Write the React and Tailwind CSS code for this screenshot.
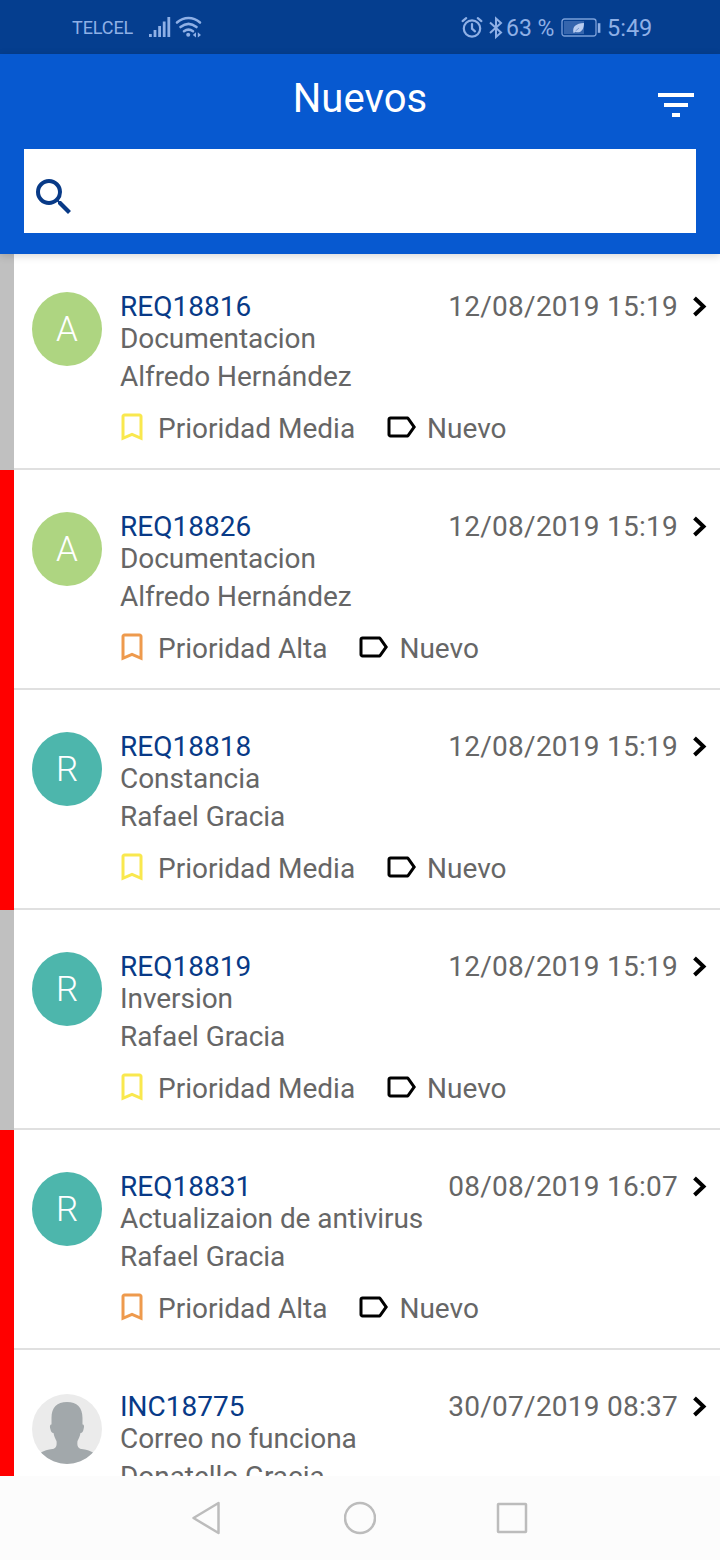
import React from 'react';
import { MdBookmarkBorder, MdFilterList, MdLabelOutline, MdSearch } from 'react-icons/md';

const tickets = [
  { id: 'REQ18816', title: 'Documentacion', owner: 'Alfredo Hernández', date: '12/08/2019 15:19', priority: 'Media', late: false },
  { id: 'REQ18826', title: 'Documentacion', owner: 'Alfredo Hernández', date: '12/08/2019 15:19', priority: 'Alta', late: true },
  { id: 'REQ18818', title: 'Constancia', owner: 'Rafael Gracia', date: '12/08/2019 15:19', priority: 'Media', late: true },
  { id: 'REQ18819', title: 'Inversion', owner: 'Rafael Gracia', date: '12/08/2019 15:19', priority: 'Media', late: false },
  { id: 'REQ18831', title: 'Actualizaion de antivirus', owner: 'Rafael Gracia', date: '08/08/2019 16:07', priority: 'Alta', late: true },
  { id: 'INC18775', title: 'Correo no funciona', owner: 'Donatello Gracia', date: '30/07/2019 08:37', late: true, photo: true },
];

const avatarColors = { A: 'bg-[#aed581]', R: 'bg-[#4db6ac]' };
const priorityColors = { Media: 'text-[#f9e84e]', Alta: 'text-[#ee9a4d]' };

const StatusBar = () => (
  <div className="h-[54px] shrink-0 bg-[#053e8f] text-[#8fb0e6] flex items-center pl-[72px] pr-[68px] pt-0.5">
    <span className="text-[18px] tracking-[-0.1px] w-[76px] -mt-0.5">TELCEL</span>
    <svg className="w-[24px] h-[24px]" viewBox="0 0 24 24" fill="currentColor">
      <rect x="1" y="18" width="2.8" height="3" />
      <rect x="5.6" y="14" width="2.8" height="7" />
      <rect x="10.2" y="10" width="2.8" height="11" />
      <rect x="14.8" y="5.5" width="2.8" height="15.5" />
      <rect x="19.4" y="1" width="2.8" height="20" />
    </svg>
    <svg className="w-[28px] h-[24px] ml-[3px]" viewBox="0 0 28 24" fill="none" stroke="currentColor" strokeWidth="2.6" strokeLinecap="round">
      <path d="M2 6.5C9 0.5 18 0.5 25 6.5" />
      <path d="M5.5 11C10.5 7 16.5 7 21.5 11" />
      <path d="M9 15.2C12 13 15 13 18 15.2" />
      <circle cx="13.2" cy="18.8" r="2" fill="currentColor" stroke="none" />
      <path d="M21 16.2v5.4L17.8 18.9zM22.8 16.2v5.4l3.2-2.7z" fill="currentColor" stroke="none" />
    </svg>

    <div className="flex items-center ml-auto">
      {/* Alarm */}
      <svg className="w-[24px] h-[24px]" viewBox="0 0 24 24" fill="none" stroke="currentColor" strokeWidth="2.2" strokeLinecap="round">
        <circle cx="12" cy="12.5" r="8.2" />
        <path d="M12 8V12.7l3 2.6M2.6 5.1l3.6-3M21.4 5.1l-3.6-3" />
      </svg>
      {/* Bluetooth */}
      <svg className="w-[14px] h-[24px] ml-[5px]" viewBox="0 0 14 24" fill="none" stroke="currentColor" strokeWidth="2">
        <path d="M1 6.5L12 16.5L7 21V2.5L12 7L1 17" />
      </svg>
      <span className="text-[23px] leading-none ml-[3px] w-[55px] whitespace-nowrap">63 %</span>
      {/* Battery */}
      <svg className="w-[40px] h-[22px]" viewBox="0 0 40 22" fill="none">
        <rect x="1" y="2" width="34" height="17" rx="2.5" stroke="currentColor" strokeOpacity="0.85" strokeWidth="1.3" />
        <rect x="3" y="4" width="20" height="13" fill="currentColor" fillOpacity="0.35" />
        <path d="M36.8 6.2h2.6v9.6h-2.6z" fill="currentColor" />
        <path d="M12.5 16C11 9.5 15 6.5 23 6C23 12.5 20 16.5 14.5 15L12.5 16Z" fill="#b9cdf0" />
        <path d="M14.5 14L18 11" stroke="#4a74b8" strokeWidth="0.6" />
      </svg>
      <span className="text-[23.5px] leading-none ml-[6px] w-[45px] mt-0.5">5:49</span>
    </div>
  </div>
);

const Header = () => (
  <header className="relative z-10 h-[200px] shrink-0 bg-[#0759d0] px-6 shadow-[0_2px_8px_rgba(0,0,0,0.16)]">
    <div className="grid grid-cols-[48px_1fr_48px] h-[95px] -mr-[4px]">
      <h1 className="col-start-2 text-center text-[40px] leading-[48px] tracking-[0.1px] text-white pt-[21px] -ml-[4px]">Nuevos</h1>
      <button className="mt-[27px] h-12 text-white">
        <MdFilterList className="w-12 h-12" />
      </button>
    </div>
    <div className="flex items-end h-[84px] bg-white pl-1.5 pb-3">
      <MdSearch className="w-12 h-12 text-[#083a87]" />
      <input className="flex-1 h-12 outline-none text-[28px] text-[#666]" />
    </div>
  </header>
);

const Avatar = ({ letter, photo }) => {
  if (photo) {
    return (
      <svg className="w-[70px] h-[70px] mt-[2px] rounded-full" viewBox="0 0 70 70">
        <rect width="70" height="70" fill="#ebebeb" />
        <path
          d="M35 8C25 8 19.5 13.5 19.5 24V30.5C17.5 30.5 17.8 33 18.5 35.5C19 37.8 20 39.2 21.5 39C22.3 43 23.5 45 24.5 47C25 51 24.500 54.500 20.500 55C16 55.500 12 56.500 8 59V70H62V59C58 56.500 54 55.500 49.500 55C45.500 54.500 45 51 45.500 47C46.500 45 47.700 43 48.500 39C50 39.200 51 37.800 51.500 35.500C52.200 33 52.500 30.500 50.500 30.500V24C50.500 13.500 45 8 35 8Z"
          fill="#a2a8ab"
        />
      </svg>
    );
  }
  return (
    <div className={`w-[70px] h-[74px] pt-0.5 rounded-[50%] flex items-center justify-center text-white text-[35px] font-light ${avatarColors[letter]}`}>
      {letter}
    </div>
  );
};

const TicketRow = ({ ticket }) => (
  <li className={`h-[220px] shrink-0 border-l-[14px] ${ticket.late ? 'border-[#ff0000]' : 'border-[#c0c0c0]'}`}>
    <div className="flex h-full border-b-2 border-[#e0e0e0] pl-[18px]">
      <div className="w-[88px] pt-[42px] shrink-0">
        <Avatar letter={ticket.owner[0]} photo={ticket.photo} />
      </div>
      <div className="flex-1 pt-[41px] text-[28px] leading-8 whitespace-nowrap text-[#666]">
        <div className="flex items-center pr-[13px]">
          <span className="text-[#083a87]">{ticket.id}</span>
          <span className="ml-auto tracking-[0.25px]">{ticket.date}</span>
          <svg className="w-[15px] h-[22px] ml-[14px]" viewBox="0 0 15 22" fill="none" stroke="#000" strokeWidth="4">
            <path d="M2.5 2L11.5 10.5L2.5 19" />
          </svg>
        </div>
        <p className="tracking-[-0.06px]">{ticket.title}</p>
        <p className="mt-1.5 tracking-[-0.06px]">{ticket.owner}</p>
        {ticket.priority && (
          <div className="flex items-center mt-5">
            <MdBookmarkBorder className={`w-9 h-9 -mt-2 -mb-1 -ml-1.5 ${priorityColors[ticket.priority]}`} />
            <span className="ml-2">Prioridad {ticket.priority}</span>
            <MdLabelOutline className="w-9 h-9 -mt-2 -mb-1 ml-7 text-black" />
            <span className="ml-2">Nuevo</span>
          </div>
        )}
      </div>
    </div>
  </li>
);

const NavBar = () => (
  <nav className="h-[84px] shrink-0 bg-[#fcfcfc] flex items-center justify-center gap-[120px] text-[#bcbcbc]">
    <svg className="w-8 h-9" viewBox="0 0 32 36" fill="none" stroke="currentColor" strokeWidth="2.5" strokeLinejoin="round">
      <path d="M1.5 18L26.5 3V33Z" />
    </svg>
    <svg className="w-8 h-9" viewBox="0 0 32 36" fill="none" stroke="currentColor" strokeWidth="2.5">
      <circle cx="16" cy="18" r="15" />
    </svg>
    <svg className="w-8 h-9" viewBox="0 0 32 36" fill="none" stroke="currentColor" strokeWidth="2.5" strokeLinejoin="round">
      <rect x="2" y="4" width="28" height="28" rx="0.5" />
    </svg>
  </nav>
);

const App = () => (
  <div className="w-[720px] h-[1560px] flex flex-col overflow-hidden bg-white font-[Roboto,sans-serif]">
    <StatusBar />
    <Header />
    <main className="flex-1 min-h-0 -mt-1 overflow-hidden">
      <ul className="flex flex-col">
        {tickets.map((ticket) => (
          <TicketRow key={ticket.id} ticket={ticket} />
        ))}
      </ul>
    </main>
    <NavBar />
  </div>
);

export default App;
